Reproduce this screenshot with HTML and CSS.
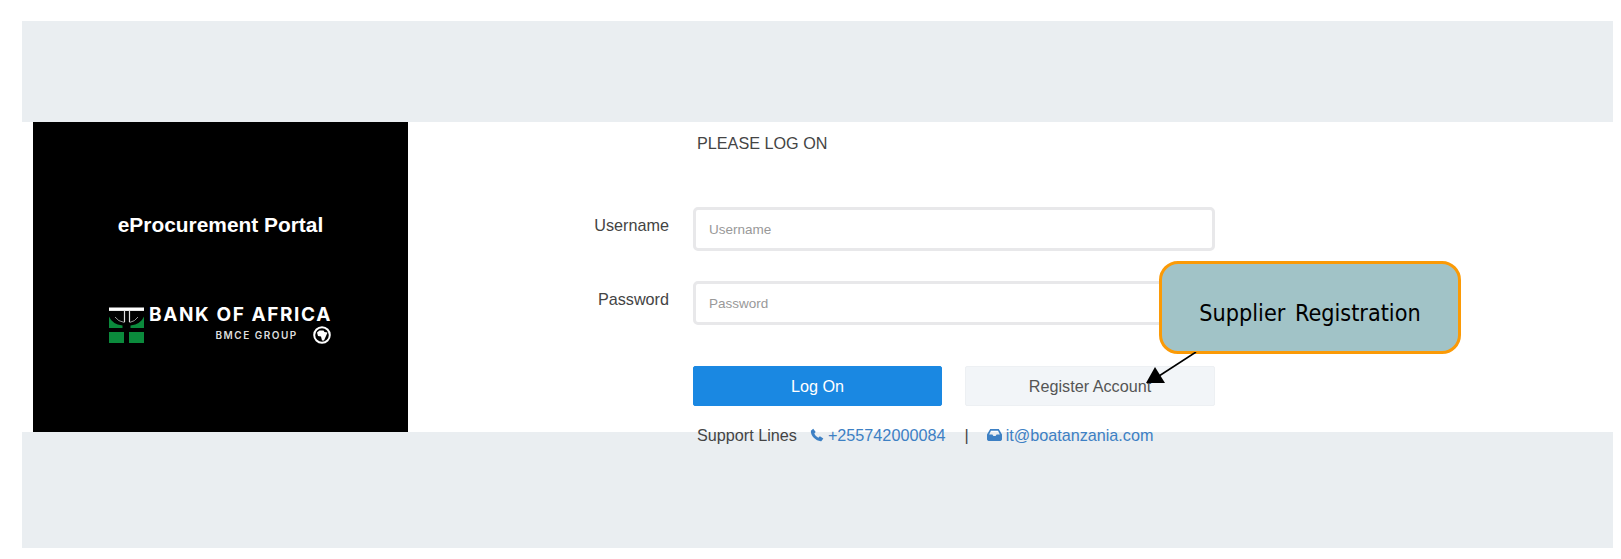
FILE: index.html
```html
<!DOCTYPE html>
<html lang="en">
<head>
<meta charset="utf-8">
<title>eProcurement Portal</title>
<link rel="stylesheet" href="styles.css">
</head>
<body>
<div class="page">
  <div class="band band-top"></div>
  <main class="main">
    <aside class="brand">
      <h1 class="brand-title">eProcurement Portal</h1>
      <svg class="logo" width="232" height="42" viewBox="0 0 232 42">
        <path d="M0 9.5Q3 17 13.5 18.5V21H0Z" fill="#0b8a3c"/>
        <path d="M35 9.5Q32 17 21.5 18.5V21H35Z" fill="#0b8a3c"/>
        <rect x="0" y="0.5" width="35" height="3.4" fill="#fff"/>
        <path d="M15.5 3V15M20.5 3V15" fill="none" stroke="#ddd" stroke-width="1.2"/>
        <path d="M6 10Q9 14.5 15.5 15.5M29 10Q26 14.5 20.5 15.5" fill="none" stroke="#999" stroke-width="1"/>
        <rect x="0" y="25" width="15" height="11" fill="#0b8a3c"/>
        <rect x="20" y="25" width="15" height="11" fill="#0b8a3c"/>
        <text class="logo-main" x="40" y="14">BANK OF AFRICA</text>
        <text class="logo-sub" x="106.5" y="31.5">BMCE GROUP</text>
        <circle cx="213" cy="28" r="7.8" fill="none" stroke="#fff" stroke-width="2"/>
        <path d="M208 25.5L210.5 23.5 214.5 23.5 215.5 25 218.5 25.5 217 29 215 33.5 213 33.5 212 29.5 209 29Z" fill="#fff"/>
      </svg>
    </aside>
    <section class="login">
      <p class="heading">PLEASE LOG ON</p>
      <form class="form">
        <label class="label" for="user">Username</label>
        <input class="input" id="user" type="text" placeholder="Username">
        <label class="label" for="pass">Password</label>
        <input class="input" id="pass" type="password" placeholder="Password">
        <div class="actions">
          <button class="btn btn-primary" type="button">Log On</button>
          <button class="btn btn-light" type="button">Register Account</button>
        </div>
      </form>
      <p class="support">
        <span class="support-label">Support Lines</span>
        <a class="link" href="#">
          <svg class="icon" width="14" height="14" viewBox="0 0 13 13"><path d="M.8 2.6 3 .6 5.3 3.7 4 5.2C4.7 6.9 6 8.2 7.7 9L9.2 7.6 12.4 9.7 10.5 12.2C5.8 12.6.4 7.2.8 2.6Z" fill="currentColor"/></svg>
          +255742000084</a>
        <span class="sep">|</span>
        <a class="link" href="#">
          <svg class="icon" width="15" height="12" viewBox="0 0 14 11"><path d="M3 0H11L14 5V9.5C14 10.3 13.4 11 12.5 11H1.5C.6 11 0 10.3 0 9.5V5ZM3.7 1.5 2 5H5L6 6.5H8L9 5H12L10.3 1.5Z" fill="currentColor" fill-rule="evenodd"/></svg>
          it@boatanzania.com</a>
      </p>
    </section>
  </main>
  <div class="band band-bottom"></div>
  <div class="callout">Supplier Registration</div>
  <svg class="arrow" width="52" height="34" viewBox="0 0 52 34">
    <path d="M50 0 13 24" stroke="#000" stroke-width="1.6" fill="none"/>
    <path d="M0 31 9 15 19 31Z" fill="#000"/>
  </svg>
</div>
</body>
</html>
```
FILE: styles.css
```css
* { box-sizing: border-box; }
html, body { margin: 0; background: #fff; }
body { font-family: "Liberation Sans", Arial, sans-serif; color: #444; }
.page { position: relative; width: 1621px; height: 559px; padding: 21px 8px 0 22px; overflow: hidden; }
.band { background: #eaeef1; }
.band-top { height: 101px; }
.band-bottom { height: 116px; }
.main { display: flex; height: 310px; }
.brand { width: 375px; margin-left: 11px; background: #000; display: flex; flex-direction: column; align-items: center; padding-top: 92px; }
.brand-title { margin: 0; color: #fff; font-size: 20.9px; line-height: 22px; font-weight: 700; }
.logo { display: block; margin: 71px 0 0 8px; overflow: visible; }
.logo-main { font-family: Inter, "Liberation Sans", sans-serif; font-size: 19px; font-weight: 700; fill: #fff; letter-spacing: 1.6px; }
.logo-sub { font-family: Inter, "Liberation Sans", sans-serif; font-size: 10px; font-weight: 600; fill: #ddd; letter-spacing: 1.5px; }
.login { flex: 0 0 auto; width: 807px; }
.heading { margin: 0; padding: 12px 0 0 289px; font-size: 16.2px; line-height: 18px; color: #444; }
.form { display: grid; grid-template-columns: 285px 522px; margin-top: 55px; row-gap: 30px; }
.label { text-align: right; padding-right: 24px; padding-top: 9px; font-size: 16.2px; line-height: 18px; color: #444; }
.input { width: 522px; height: 44px; border: 3px solid #e8e8ea; border-radius: 5px; padding: 0 13px; font: 13.5px "Liberation Sans", Arial, sans-serif; background: #fff; outline: none; }
.input::placeholder { color: #999; opacity: 1; }
.actions { grid-column: 2; display: flex; gap: 23px; margin-top: 11px; }
.btn { width: 249px; height: 40px; border-radius: 2px; font: 16.2px "Liberation Sans", Arial, sans-serif; padding: 0; }
.btn-primary { background: #1a88e2; border: 1px solid #1a88e2; color: #fff; }
.btn-light { width: 250px; background: #f2f5f8; border: 1px solid #edf0f3; color: #555; }
.support { margin: 20px 0 0; padding-left: 289px; font-size: 16.2px; line-height: 18px; white-space: nowrap; display: flex; align-items: center; }
.support-label { color: #444; margin-right: 13px; }
.link { color: #3d80c4; text-decoration: none; display: inline-flex; align-items: center; gap: 4px; }
.icon { display: block; }
.sep { margin: 0 18px 0 19px; color: #444; }
.callout { position: absolute; left: 1159px; top: 261px; width: 302px; height: 93px; padding-top: 9px; background: #a1c3c7; border: 3px solid #fb9a06; border-radius: 19px; display: flex; align-items: center; justify-content: center; font-family: "DejaVu Sans Condensed", "DejaVu Sans", sans-serif; font-stretch: condensed; font-size: 23.2px; color: #000; word-spacing: 3px; }
.arrow { position: absolute; left: 1146px; top: 352px; }
```
